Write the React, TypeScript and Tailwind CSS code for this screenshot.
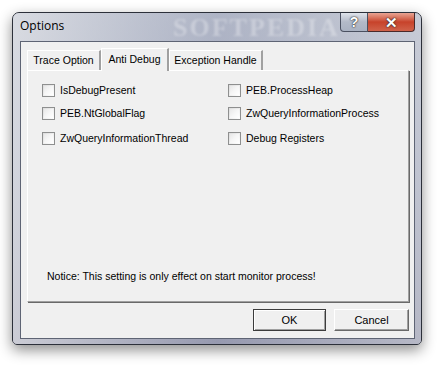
import React from "react";

const font = { fontFamily: '"Liberation Sans", Arial, sans-serif' };

function Check({ label }: { label: string }) {
  return (
    <div className="flex items-center h-[13px]">
      <div className="w-[13px] h-[13px] border border-[#8e8f8f] bg-gradient-to-br from-[#dcdcdc] to-[#ffffff] p-px">
        <div className="w-full h-full bg-gradient-to-br from-[#e8e8e8] via-[#f6f6f6] to-[#ffffff]" />
      </div>
      <span className="ml-[5px] text-[10.5px] text-black leading-none">{label}</span>
    </div>
  );
}

function Tab({ label, active, w }: { label: string; active?: boolean; w: string }) {
  if (active) {
    return (
      <div
        className={`${w} h-[23px] -mb-px relative z-10 bg-[#f0f0f0] border-t border-l border-white border-r-[2px] border-r-[#a0a0a0] flex items-start justify-center pt-[3px] text-[10.5px]`}
      >
        {label}
      </div>
    );
  }
  return (
    <div
      className={`${w} h-[20px] bg-[#f0f0f0] border-t border-l border-white border-r-[2px] border-r-[#a0a0a0] flex items-center justify-center pt-[1px] text-[10.5px]`}
    >
      {label}
    </div>
  );
}

export default function App() {
  return (
    <div className="w-[443px] h-[367px] bg-white pl-[12px] pt-[12px]" style={font}>
      <div className="relative w-[410px] h-[333px] rounded-t-[7px] rounded-b-[5px] border border-[#2c303a] bg-gradient-to-b from-[#c9cdd7] via-[#b4b8c8] to-[#9d9cae] shadow-[0_5px_14px_rgba(0,0,0,0.45)] flex flex-col overflow-hidden">
        <div className="absolute inset-0 bg-gradient-to-r from-[#dfe1e6]/70 via-[#8e96b0]/45 to-[#c7cbd6]/60 pointer-events-none" />
        {/* title bar */}
        <div className="relative h-[28px] flex items-start">
          <span className="ml-[7px] mt-[7px] text-[12px] text-black leading-none" style={{ fontFamily: '"Open Sans", "Noto Sans", sans-serif' }}>
            Options
          </span>
          <span
            className="absolute left-[160px] top-[2px] text-[26px] font-bold text-white/30 tracking-[2px] leading-none blur-[1px]"
            style={{ fontFamily: '"Liberation Serif", serif' }}
          >
            SOFTPEDIA
          </span>
          <div className="ml-auto mr-[6px] flex">
            <div className="w-[28px] h-[19px] rounded-bl-[4px] border border-t-0 border-[#4a5060] bg-gradient-to-b from-[#dfe3ea] via-[#b3bac8] to-[#aab2c2] flex items-center justify-center text-white text-[14px] font-bold leading-none [text-shadow:0_0_2px_#222,0_0_1px_#222]">
              ?
            </div>
            <div className="w-[47px] h-[19px] rounded-br-[4px] border border-t-0 border-l-0 border-[#4a2a2a] bg-gradient-to-b from-[#e8a493] via-[#c7422a] to-[#d0624a] flex items-center justify-center text-white text-[15px] font-black leading-none [text-shadow:0_0_2px_#222,0_0_1px_#222]">
              ✕
            </div>
          </div>
        </div>
        {/* client */}
        <div className="relative ml-[7px] mr-[6px] mb-[5px] flex-1 border border-[#5e6474] bg-[#f0f0f0] px-[6px] pt-[6px] flex flex-col">
          <div className="flex items-end h-[22px] pl-0">
            <Tab label="Trace Option" w="w-[74px]" />
            <Tab label="Anti Debug" active w="w-[68px]" />
            <Tab label="Exception Handle" w="w-[94px]" />
          </div>
          <div className="w-[382px] h-[232px] border-t border-l border-white border-r border-b border-r-[#a0a0a0] border-b-[#a0a0a0] shadow-[1px_1px_0_#696969] pl-[14px]">
            <div className="grid grid-cols-[186px_1fr]">
              <div className="mt-[13px]"><Check label="IsDebugPresent" /></div>
              <div className="mt-[13px]"><Check label="PEB.ProcessHeap" /></div>
              <div className="mt-[10px]"><Check label="PEB.NtGlobalFlag" /></div>
              <div className="mt-[10px]"><Check label="ZwQueryInformationProcess" /></div>
              <div className="mt-[12px]"><Check label="ZwQueryInformationThread" /></div>
              <div className="mt-[12px]"><Check label="Debug Registers" /></div>
            </div>
            <div className="mt-[126px] ml-[5px] text-[10.5px] leading-none">
              Notice: This setting is only effect on start monitor process!
            </div>
          </div>
          <div className="flex justify-end mt-[7px] gap-[8px] pr-0 -mr-px">
            <div className="w-[73px] h-[22px] border border-[#3c3c3c] bg-[#f0f0f0] flex items-center justify-center text-[11px] shadow-[inset_1px_1px_0_#fff,inset_-1px_-1px_0_#a0a0a0]">
              OK
            </div>
            <div className="w-[75px] h-[22px] border border-white border-r-[#696969] border-b-[#696969] bg-[#f0f0f0] flex items-center justify-center text-[11px] shadow-[inset_-1px_-1px_0_#a0a0a0]">
              Cancel
            </div>
          </div>
        </div>
      </div>
    </div>
  );
}
